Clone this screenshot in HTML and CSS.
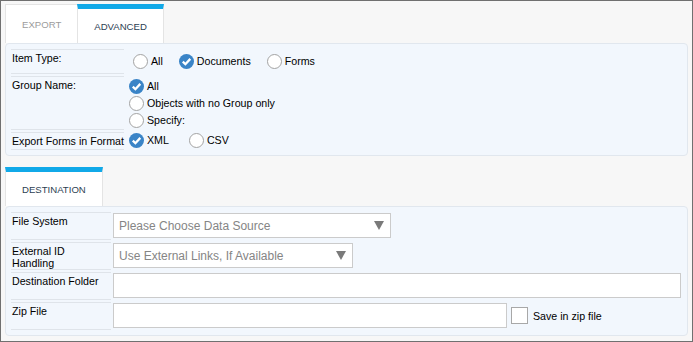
FILE: index.html
```html
<!DOCTYPE html>
<html lang="en">
  <head>
    <meta charset="utf-8">
    <title>Export</title>
    <link rel="stylesheet" href="styles.css">
  </head>
  <body>
    <div class="window">
      <div class="tabs">
        <div class="tab">EXPORT</div>
        <div class="tab active">ADVANCED</div>
      </div>
      <div class="panel advanced">
        <div class="label">Item Type:</div>
        <div class="choices row first">
          <label class="choice"><span class="radio"></span>All</label>
          <label class="choice"><span class="radio on"><svg viewBox="0 0 15 15"><path d="M3.8 7.6 L6.4 10.2 L11.3 4.9"/></svg></span>Documents</label>
          <label class="choice"><span class="radio"></span>Forms</label>
        </div>
        <div class="label">Group Name:</div>
        <div class="choices column">
          <label class="choice"><span class="radio on"><svg viewBox="0 0 15 15"><path d="M3.8 7.6 L6.4 10.2 L11.3 4.9"/></svg></span>All</label>
          <label class="choice"><span class="radio"></span>Objects with no Group only</label>
          <label class="choice"><span class="radio"></span>Specify:</label>
        </div>
        <div class="label">Export Forms in Format</div>
        <div class="choices row last">
          <label class="choice"><span class="radio on"><svg viewBox="0 0 15 15"><path d="M3.8 7.6 L6.4 10.2 L11.3 4.9"/></svg></span>XML</label>
          <label class="choice"><span class="radio"></span>CSV</label>
        </div>
      </div>
      <div class="tabs second">
        <div class="tab active">DESTINATION</div>
      </div>
      <div class="panel destination">
        <div class="label">File System</div>
        <div class="control">
          <div class="select source">Please Choose Data Source<span class="caret"></span></div>
        </div>
        <div class="label">External ID Handling</div>
        <div class="control">
          <div class="select links">Use External Links, If Available<span class="caret"></span></div>
        </div>
        <div class="label">Destination Folder</div>
        <div class="control">
          <div class="input wide"></div>
        </div>
        <div class="label">Zip File</div>
        <div class="control">
          <div class="input zip"></div>
          <label class="check"><span class="box"></span>Save in zip file</label>
        </div>
      </div>
    </div>
  </body>
</html>
```

FILE: styles.css
```css
* {
  box-sizing: border-box;
}
body {
  margin: 0;
  font-family: "Liberation Sans", Arial, sans-serif;
  font-size: 10.67px;
  color: #000;
}
.window {
  width: 693px;
  height: 342px;
  padding: 3px 4px;
  border: 1px solid #707070;
  background-color: #f7f7f7;
}
.tabs {
  display: flex;
  &.second {
    margin-top: 11px;
  }
}
.tab {
  height: 39px;
  margin-right: -1px;
  padding: 0 16px;
  display: flex;
  align-items: center;
  border: 1px solid #e4e4e4;
  border-bottom: none;
  background-color: #fff;
  font-size: 9.6px;
  color: #9c9c9c;
  &.active {
    border-top: 5px solid #11a9e8;
    color: #2c3e52;
  }
}
.panel {
  display: grid;
  padding: 5px;
  border: 1px solid #e1e7ee;
  border-radius: 4px;
  background-color: #f2f7fd;
  &.advanced {
    grid-template-columns: 113px 1fr;
    grid-template-rows: 25px 54px 18px;
    column-gap: 5px;
    row-gap: 2px;
    & .label {
      white-space: nowrap;
    }
  }
  &.destination {
    grid-template-columns: 100px 1fr;
    grid-auto-rows: 28px;
    column-gap: 2px;
    row-gap: 2px;
    & .label {
      padding-right: 5px;
    }
  }
}
.label {
  padding: 2px 1px;
  line-height: 12px;
  border-top: 1px solid #dfe4ea;
  border-bottom: 1px solid #dfe4ea;
}
.choices {
  display: flex;
  &.row {
    align-items: flex-start;
  }
  &.first {
    padding: 5px 0 0 4px;
    gap: 16px;
  }
  &.last {
    padding-top: 1px;
    gap: 20px;
  }
  &.column {
    flex-direction: column;
    padding-top: 3px;
    gap: 2px;
  }
}
.choice {
  display: flex;
  align-items: center;
  gap: 3px;
  line-height: 15px;
}
.radio {
  width: 15px;
  height: 15px;
  border: 1px solid #a3a3a3;
  border-radius: 50%;
  background-color: #fff;
  &.on {
    border: none;
    background-color: #3a84c7;
  }
  & svg {
    display: block;
    width: 15px;
    height: 15px;
    fill: none;
    stroke: #fff;
    stroke-width: 2.3;
  }
}
.control {
  display: flex;
  align-items: flex-start;
  padding-top: 1px;
}
.select, .input {
  height: 25px;
  border: 1px solid #cbcbcb;
  background-color: #fff;
}
.select {
  display: flex;
  align-items: center;
  justify-content: space-between;
  padding: 0 6px 0 5px;
  font-size: 12px;
  color: #858585;
  &.source {
    width: 278px;
  }
  &.links {
    width: 240px;
  }
}
.caret {
  border-left: 5px solid transparent;
  border-right: 5px solid transparent;
  border-top: 9px solid #7a7a7a;
}
.input {
  &.wide {
    width: 568px;
  }
  &.zip {
    width: 394px;
  }
}
.check {
  display: flex;
  align-items: center;
  gap: 5px;
  margin: 4px 0 0 4px;
  line-height: 16px;
}
.box {
  width: 17px;
  height: 17px;
  border: 1px solid #a8a8a8;
  background-color: #fff;
}
```
